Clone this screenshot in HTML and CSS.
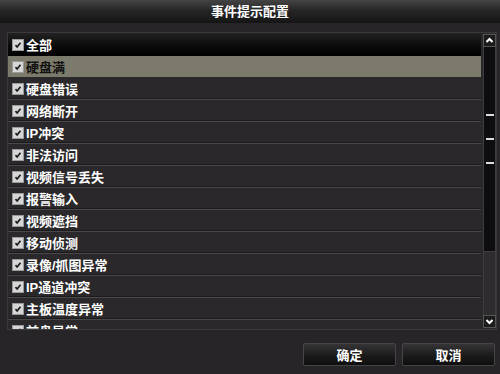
FILE: index.html
```html
<!DOCTYPE html>
<html>
<head>
<meta charset="utf-8">
<title>事件提示配置</title>
<link rel="stylesheet" href="styles.css">
</head>
<body>
<div class="title">事件提示配置</div>
<div class="content">
	<div class="panel">
		<div class="list">
			<div class="row head"><span class="cb"><svg viewBox="0 0 12 12"><path d="M3 6.2l2 2.2 4-5" /></svg></span>全部</div>
			<div class="row sel"><span class="cb"><svg viewBox="0 0 12 12"><path d="M3 6.2l2 2.2 4-5" /></svg></span><span class="dark">硬盘满</span></div>
			<div class="row"><span class="cb"><svg viewBox="0 0 12 12"><path d="M3 6.2l2 2.2 4-5" /></svg></span>硬盘错误</div>
			<div class="row"><span class="cb"><svg viewBox="0 0 12 12"><path d="M3 6.2l2 2.2 4-5" /></svg></span>网络断开</div>
			<div class="row"><span class="cb"><svg viewBox="0 0 12 12"><path d="M3 6.2l2 2.2 4-5" /></svg></span>IP冲突</div>
			<div class="row"><span class="cb"><svg viewBox="0 0 12 12"><path d="M3 6.2l2 2.2 4-5" /></svg></span>非法访问</div>
			<div class="row"><span class="cb"><svg viewBox="0 0 12 12"><path d="M3 6.2l2 2.2 4-5" /></svg></span>视频信号丢失</div>
			<div class="row"><span class="cb"><svg viewBox="0 0 12 12"><path d="M3 6.2l2 2.2 4-5" /></svg></span>报警输入</div>
			<div class="row"><span class="cb"><svg viewBox="0 0 12 12"><path d="M3 6.2l2 2.2 4-5" /></svg></span>视频遮挡</div>
			<div class="row"><span class="cb"><svg viewBox="0 0 12 12"><path d="M3 6.2l2 2.2 4-5" /></svg></span>移动侦测</div>
			<div class="row"><span class="cb"><svg viewBox="0 0 12 12"><path d="M3 6.2l2 2.2 4-5" /></svg></span>录像/抓图异常</div>
			<div class="row"><span class="cb"><svg viewBox="0 0 12 12"><path d="M3 6.2l2 2.2 4-5" /></svg></span>IP通道冲突</div>
			<div class="row"><span class="cb"><svg viewBox="0 0 12 12"><path d="M3 6.2l2 2.2 4-5" /></svg></span>主板温度异常</div>
			<div class="row"><span class="cb"><svg viewBox="0 0 12 12"><path d="M3 6.2l2 2.2 4-5" /></svg></span>前盘异常</div>
		</div>
		<div class="scroll">
			<div class="sbtn"><svg viewBox="0 0 11 11"><path d="M2.5 7l3-3 3 3" /></svg></div>
			<div class="thumb"><i></i><i></i><i></i></div>
			<div class="rest"></div>
			<div class="sbtn"><svg viewBox="0 0 11 11"><path d="M2.5 4l3 3 3-3" /></svg></div>
		</div>
	</div>
	<div class="foot">
		<button>确定</button>
		<button>取消</button>
	</div>
</div>
</body>
</html>
```

FILE: styles.css
```css
*{margin:0; padding:0; box-sizing:border-box;}
body{width:500px; height:374px; overflow:hidden; background:#272528; color:#fff; font-family:"Liberation Sans","Noto Sans CJK SC",sans-serif;}
.title{height:23px; line-height:23px; text-align:center; font-size:13px; font-weight:bold; background:linear-gradient(#444 0,#262626 45%,#151515 100%);}
.content{padding:9px 3px 0 7px;}
.panel{display:flex; height:298px; border:1px solid #3b393b; background:#2a282a;}
.list{width:473px; overflow:hidden;}
.row{height:22px; display:flex; align-items:center; padding-left:4px; font-size:13px; font-weight:bold; border-bottom:1px solid #4a484a; box-shadow:inset 0 -1px 0 #1c1b1c;}
.row.head{height:23px; border-bottom:0; box-shadow:none; background:linear-gradient(#222 0,#0a0a0a 60%,#000 100%);}
.row.sel{background:#7c7b6b; border-bottom:1px solid #2a282a; box-shadow:none;}
.row .dark{color:#111;}
.cb{width:12px; height:12px; margin-right:2px; background:#d6d6d6; border:1px solid #9a9a9a; display:flex;}
.cb svg{width:10px; height:10px; fill:none; stroke:#1a1a1a; stroke-width:2;}
.scroll{width:13px; margin-left:2px; display:flex; flex-direction:column; padding:1px 0;}
.sbtn{height:13px; background:#1c1c1c; border:1px solid #555; display:flex; align-items:center; justify-content:center;}
.sbtn svg{width:11px; height:11px; fill:none; stroke:#fff; stroke-width:2;}
.thumb{height:205px; background:#0d0c0e; border:1px solid #3e3c3e; border-top:0; display:flex; flex-direction:column; align-items:center; gap:22px; padding-top:67px;}
.thumb i{display:block; width:8px; height:2px; background:#ddd;}
.rest{flex:1; background:#2e2c2e; border-left:1px solid #3e3c3e; border-right:1px solid #3e3c3e;}
.foot{display:flex; justify-content:flex-end; gap:6px; padding:13px 2px 0 0;}
.foot button{width:93px; height:23px; color:#fff; font-family:"Noto Sans CJK SC",sans-serif; font-size:13px; font-weight:bold; border:1px solid #464446; border-radius:2px; background:linear-gradient(#363436 0,#1c1b1c 55%,#0e0e0e 100%);}
```
